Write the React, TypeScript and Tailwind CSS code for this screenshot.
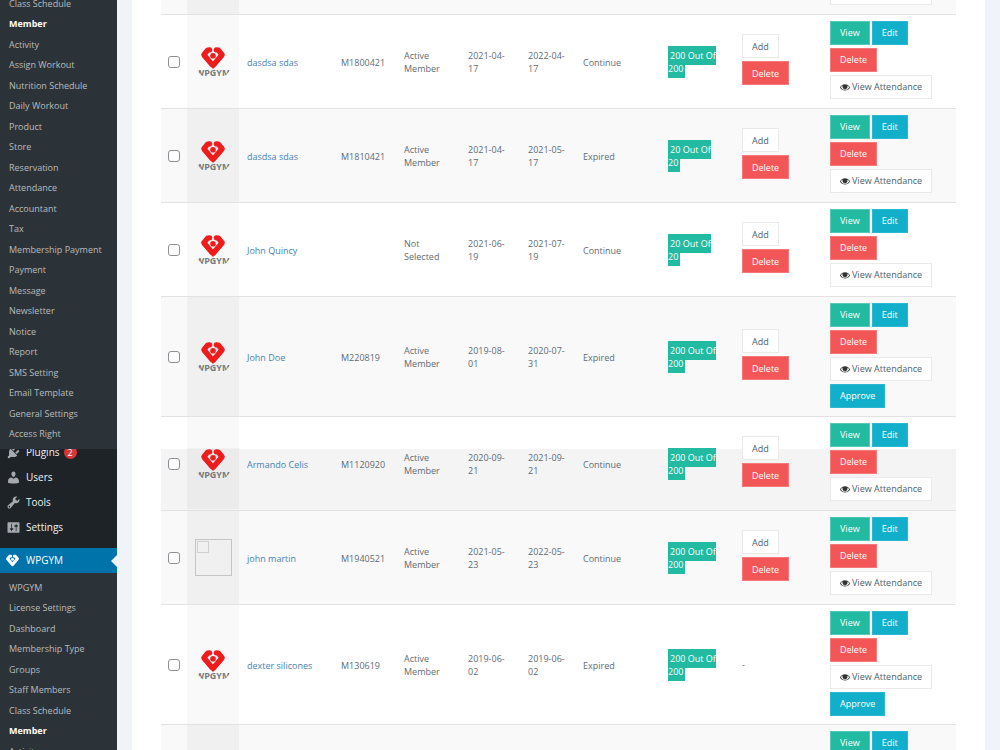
import React from 'react';

const topMenu = [
  'Class Schedule', 'Member', 'Activity', 'Assign Workout', 'Nutrition Schedule', 'Daily Workout', 'Product',
  'Store', 'Reservation', 'Attendance', 'Accountant', 'Tax', 'Membership Payment', 'Payment', 'Message',
  'Newsletter', 'Notice', 'Report', 'SMS Setting', 'Email Template', 'General Settings', 'Access Right',
];

const bottomMenu = [
  'WPGYM', 'License Settings', 'Dashboard', 'Membership Type', 'Groups', 'Staff Members', 'Class Schedule',
  'Member', 'Activity',
];

type Member = {
  name: string;
  id: string;
  type: string;
  start: string;
  end: string;
  status: string;
  limit: number;
  noPhoto?: boolean;
  noMembership?: boolean;
  approve?: boolean;
  look: string;
  photoLook: string;
};

const white = { look: 'bg-white', photoLook: 'bg-[#f9f9f9]' };
const grey = { look: 'bg-[#f9f9f9]', photoLook: 'bg-[#f0f0f0]' };
const split = {
  look: 'bg-[linear-gradient(to_bottom,#fff_32px,#f4f4f4_32px)]',
  photoLook: 'bg-[linear-gradient(to_bottom,#f9f9f9_32px,#ebebeb_32px)]',
};

const members: Member[] = [
  { name: 'dasdsa sdas', id: 'M1800421', type: 'Active Member', start: '2021-04-17', end: '2022-04-17', status: 'Continue', limit: 200, ...white },
  { name: 'dasdsa sdas', id: 'M1810421', type: 'Active Member', start: '2021-04-17', end: '2021-05-17', status: 'Expired', limit: 20, ...grey },
  { name: 'John Quincy', id: '', type: 'Not Selected', start: '2021-06-19', end: '2021-07-19', status: 'Continue', limit: 20, ...white },
  { name: 'John Doe', id: 'M220819', type: 'Active Member', start: '2019-08-01', end: '2020-07-31', status: 'Expired', limit: 200, approve: true, ...grey },
  { name: 'Armando Celis', id: 'M1120920', type: 'Active Member', start: '2020-09-21', end: '2021-09-21', status: 'Continue', limit: 200, ...split },
  { name: 'john martin', id: 'M1940521', type: 'Active Member', start: '2021-05-23', end: '2022-05-23', status: 'Continue', limit: 200, noPhoto: true, ...grey },
  { name: 'dexter silicones', id: 'M130619', type: 'Active Member', start: '2019-06-02', end: '2019-06-02', status: 'Expired', limit: 200, noMembership: true, approve: true, ...white },
];

const HeartShape = () => (
  <>
    <g fill="none" stroke="currentColor" strokeWidth="5.4" strokeLinecap="round" strokeLinejoin="round">
      <path d="M8.6 2.9 L6.8 3.1 L2.9 7.7 L11 17.4" />
      <path d="M15.4 2.9 L17.2 3.1 L21.1 7.7 L12.4 18" />
    </g>
    <path d="M1 9.8 L5 9 L12 16 L19 9 L23 9.8 L12 22 Z" fill="currentColor" />
    <circle cx="12" cy="8.8" r="2.8" fill="currentColor" />
  </>
);

const Logo = () => (
  <svg viewBox="0 0 37 37" className="h-[37px] w-[37px] rounded-full text-[#ee1c1c]" role="img" aria-label="WPGYM">
    <g transform="translate(6 4)">
      <HeartShape />
    </g>
    <text x="18" y="33" textAnchor="middle" fontFamily="Open Sans, sans-serif" fontWeight="700" fontSize="9" fill="#77797b">WPGYM</text>
  </svg>
);

const EyeIcon = () => (
  <svg viewBox="0 0 1792 1792" className="mr-[2px] h-[10px] w-[10px]" fill="#333">
    <path d="M1664 960q-152-236-381-353 61 104 61 225 0 185-131.5 316.5t-316.5 131.5-316.5-131.5-131.5-316.5q0-121 61-225-229 117-381 353 133 205 333.5 326.5t434.5 121.5 434.5-121.5 333.5-326.5zM1250 850a354 354 0 0 1-708 0 354 354 0 0 1 708 0zm-306-274q0-20-14-34t-34-14q-125 0-214.5 89.5t-89.5 214.5q0 20 14 34t34 14 34-14 14-34q0-86 61-147t147-61q20 0 34-14t14-34zm848 384q0 34-20 69-140 230-376.5 368.5t-499.5 138.5-499.5-139-376.5-368q-20-35-20-69t20-69q140-229 376.5-368t499.5-139 499.5 139 376.5 368q20 35 20 69z" />
  </svg>
);

const icons = {
  plugins: 'M13.11 4.36L9.87 7.6 8 5.73l3.24-3.24c.35-.34 1.05-.2 1.56.32.52.51.66 1.21.31 1.55zm-8 1.77l.91-1.12 9.01 9.01-1.19.84c-.71.71-2.63 1.16-3.82 1.16H6.14L4.9 17.26c-.59.59-1.54.59-2.12 0-.59-.58-.59-1.53 0-2.12l1.24-1.24v-3.88c0-1.13.4-3.19 1.09-3.89zm7.26 3.97l3.24-3.24c.34-.35 1.04-.21 1.55.31.52.51.66 1.21.31 1.55l-3.24 3.25z',
  users: 'M10 9.25c-2.27 0-2.73-3.44-2.73-3.44C7 4.02 7.82 2 9.97 2c2.16 0 2.98 2.02 2.71 3.81 0 0-.41 3.44-2.68 3.44zm0 2.57L12.72 10c2.39 0 4.52 2.33 4.52 4.53v2.49s-3.65 1.13-7.24 1.13c-3.65 0-7.24-1.13-7.24-1.13v-2.49c0-2.25 1.94-4.48 4.47-4.48z',
  tools: 'M16.68 9.77c-1.34 1.34-3.3 1.67-4.95.99l-5.41 6.52c-.99.99-2.59.99-3.58 0s-.99-2.59 0-3.57l6.52-5.42c-.68-1.65-.35-3.61.99-4.95 1.28-1.28 3.12-1.62 4.72-1.06l-2.89 2.89 2.82 2.82 2.86-2.87c.53 1.58.18 3.39-1.08 4.65zM3.81 16.21c.4.39 1.04.39 1.43 0 .4-.4.4-1.04 0-1.43-.39-.4-1.03-.4-1.43 0-.39.39-.39 1.03 0 1.43z',
  settings: 'M18 16V4c0-.55-.45-1-1-1H3c-.55 0-1 .45-1 1v12c0 .55.45 1 1 1h14c.55 0 1-.45 1-1zM8 11h1c.55 0 1 .45 1 1s-.45 1-1 1H8v1.5c0 .28-.22.5-.5.5s-.5-.22-.5-.5V13H6c-.55 0-1-.45-1-1s.45-1 1-1h1V5.5c0-.28.22-.5.5-.5s.5.22.5.5V11zm5-2h-1c-.55 0-1-.45-1-1s.45-1 1-1h1V5.5c0-.28.22-.5.5-.5s.5.22.5.5V7h1c.55 0 1 .45 1 1s-.45 1-1 1h-1v5.5c0 .28-.22.5-.5.5s-.5-.22-.5-.5V9z',
};

const MainItem = ({ icon, label, badge }: { icon: string; label: string; badge?: string }) => (
  <a href="#" className="flex h-[25px] items-center pl-[6px] text-[10px] text-[#f0f0f1]">
    <svg viewBox="0 0 20 20" className="mr-[5px] h-[15px] w-[15px]" fill="#a7aaad">
      <path d={icon} />
    </svg>
    {label}
    {badge && (
      <span className="ml-1 flex h-[13px] w-[13px] items-center justify-center rounded-full bg-[#d63638] text-[9px] text-white">
        {badge}
      </span>
    )}
  </a>
);

const SubMenu = ({ items }: { items: string[] }) => (
  <ul>
    {items.map((item) => (
      <li key={item} className="odd:h-5 even:h-[21px]">
        <a
          href="#"
          className={
            item === 'Member'
              ? 'block pl-[9px] text-[9px] leading-5 font-bold text-white'
              : 'block pl-[9px] text-[9px] leading-5 text-[#b8bbbe]'
          }
        >
          {item}
        </a>
      </li>
    ))}
  </ul>
);

const Sidebar = () => (
  <nav className="w-[117px] shrink-0 bg-[#2c3338]">
    <div className="-mt-[6px] pb-1">
      <SubMenu items={topMenu} />
    </div>
    <div className="overflow-hidden bg-[#1d2327] pb-2">
      <div className="-mt-[9px]">
        <MainItem icon={icons.plugins} label="Plugins" badge="2" />
        <MainItem icon={icons.users} label="Users" />
        <MainItem icon={icons.tools} label="Tools" />
        <MainItem icon={icons.settings} label="Settings" />
      </div>
    </div>
    <a href="#" className="flex h-[25px] items-center bg-[#0073aa] pl-[6px] text-[10px] text-white">
      <svg viewBox="0 0 24 22" className="mr-[7px] h-[13px] w-[13px]">
        <HeartShape />
      </svg>
      WPGYM
      <span className="ml-auto border-y-[6px] border-r-[6px] border-y-transparent border-r-[#f0f4f9]" />
    </a>
    <div className="pt-[5px]">
      <SubMenu items={bottomMenu} />
    </div>
  </nav>
);

const base = 'mb-[3px] mr-[2px] inline-flex h-6 items-center border px-[9px] text-[9px]';
const buttonStyles = {
  green: `${base} border-[#54c9b8] bg-[#22baa0] text-white`,
  blue: `${base} border-[#2cb7d3] bg-[#12afcb] text-white`,
  red: `${base} border-[#f5797a] bg-[#f25656] text-white`,
  plain: `${base} border-[#e9e9e9] bg-white text-[#4e5e6a]`,
};

const Button = ({ kind, children }: { kind: keyof typeof buttonStyles; children: React.ReactNode }) => (
  <button type="button" className={buttonStyles[kind]}>{children}</button>
);

const MemberRow = ({ m }: { m: Member }) => (
  <tr className={`border-t border-[#e2e2e2] ${m.approve ? 'h-[120px]' : 'h-[94px]'} ${m.look}`}>
    <td className="pt-[2px]">
      <input
        type="checkbox"
        aria-label={`Select ${m.name}`}
        className="mx-auto block h-3 w-3 appearance-none rounded-[3px] border border-[#8c8f94] bg-white"
      />
    </td>
    <td className={m.photoLook}>
      <div className="flex justify-center">
        {m.noPhoto ? (
          <div className="h-[37px] w-[37px] border border-[#c4c4c4] p-px">
            <div className="h-3 w-3 border border-[#cfcfcf]" />
          </div>
        ) : (
          <Logo />
        )}
      </div>
    </td>
    <td className="px-2 pt-[2px]"><a href="#" className="text-[#4682b4]">{m.name}</a></td>
    <td className="px-2 pt-[2px]">{m.id}</td>
    <td className="px-2 pt-[2px]">
      {m.type.split(' ')[0]}<br />{m.type.split(' ')[1]}
    </td>
    <td className="px-2 pt-[2px]">{m.start.slice(0, 8)}<br />{m.start.slice(8)}</td>
    <td className="px-2 pt-[2px]">{m.end.slice(0, 8)}<br />{m.end.slice(8)}</td>
    <td className="px-2 pt-[2px]">{m.status}</td>
    <td className="px-2 pt-[2px] whitespace-nowrap">
      <span className="bg-[#22baa0] py-[3px] pr-[2px] pl-[2px] text-white">
        {m.limit} Out Of<br />{m.limit}
      </span>
    </td>
    <td className="px-[7px]">
      {m.noMembership ? '-' : (
        <div className="flex flex-col items-start">
          <Button kind="plain">Add</Button>
          <Button kind="red">Delete</Button>
        </div>
      )}
    </td>
    <td className="pt-[6px] pb-[5px] pl-[7px] align-top">
      <div className="flex">
        <Button kind="green">View</Button>
        <Button kind="blue">Edit</Button>
      </div>
      <div className="flex flex-col items-start">
        <Button kind="red">Delete</Button>
        <Button kind="plain"><EyeIcon />View Attendance</Button>
        {m.approve && <Button kind="blue">Approve</Button>}
      </div>
    </td>
  </tr>
);

const App = () => {
  return (
    <div className="flex h-screen overflow-hidden bg-[#f0f4f9] font-['Open_Sans',sans-serif]">
      <Sidebar />
      <main className="mr-[15px] ml-[15px] flex-1 bg-white pr-[29px] pl-[29px]">
        <table className="w-full table-fixed text-left text-[9px] leading-[13px] text-[#5f6b74]">
          <colgroup>
            <col className="w-[26px]" />
            <col className="w-[52px]" />
            <col className="w-[94px]" />
            <col className="w-[63px]" />
            <col className="w-[64px]" />
            <col className="w-[60px]" />
            <col className="w-[55px]" />
            <col className="w-[85px]" />
            <col className="w-[75px]" />
            <col className="w-[88px]" />
            <col />
          </colgroup>
          <tbody>
            <tr className="h-[14px] bg-[#f9f9f9]">
              <td />
              <td className="bg-[#f0f0f0]" />
              <td colSpan={8} />
              <td className="pl-[7px] align-top">
                <div className="h-[5px] w-[102px] border border-t-0 border-[#e9e9e9] bg-white" />
              </td>
            </tr>
            {members.map((m) => (
              <MemberRow key={m.name + m.id} m={m} />
            ))}
            <tr className="border-t border-[#e2e2e2] bg-[#f9f9f9]">
              <td />
              <td className="bg-[#f0f0f0]" />
              <td colSpan={8} />
              <td className="pt-[6px] pl-[7px]">
                <div className="flex">
                  <Button kind="green">View</Button>
                  <Button kind="blue">Edit</Button>
                </div>
              </td>
            </tr>
          </tbody>
        </table>
      </main>
    </div>
  );
};

export default App;
